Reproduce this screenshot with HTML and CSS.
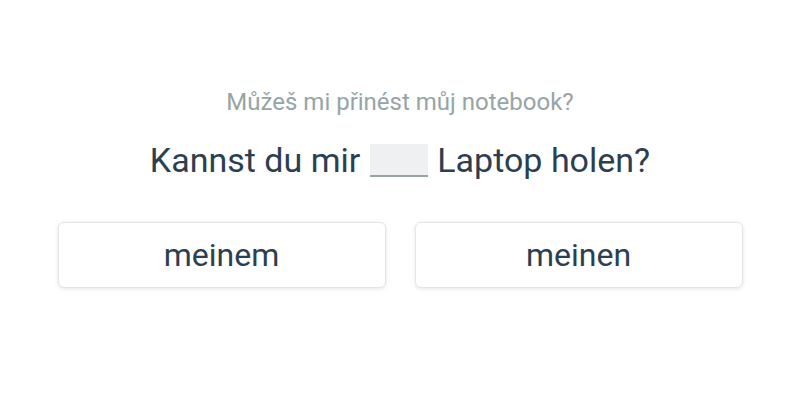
FILE: index.html
```html
<!DOCTYPE html>
<html lang="de">
<head>
<meta charset="utf-8">
<link rel="stylesheet" href="styles.css">
</head>
<body>
<main class="exercise">
  <p class="hint">Můžeš mi přinést můj notebook?</p>
  <p class="sentence">Kannst du mir <span class="blank"></span> Laptop holen?</p>
  <div class="choices">
    <button class="choice">meinem</button>
    <button class="choice">meinen</button>
  </div>
</main>
</body>
</html>
```

FILE: styles.css
```css
html, body {
  margin: 0;
  padding: 0;
  background: #ffffff;
}
body {
  font-family: Roboto, "Noto Sans", sans-serif;
  width: 800px;
  height: 400px;
}
.exercise {
  display: flex;
  flex-direction: column;
  align-items: center;
  padding-top: 86px;
}
.hint {
  margin: 0;
  font-size: 24px;
  line-height: 32px;
  color: #95a5a6;
}
.sentence {
  margin: 22px 0 0;
  font-size: 34px;
  line-height: 40px;
  color: #2c3e50;
  display: flex;
  align-items: center;
}
.blank {
  display: inline-block;
  width: 58px;
  height: 31px;
  background: #eef0f1;
  border-bottom: 2px solid #95a5a6;
  margin: 0 9px 0 10px;
}
.choices {
  display: grid;
  grid-template-columns: 328px 328px;
  gap: 29px;
  margin-top: 42px;
}
.choice {
  height: 66px;
  background: #ffffff;
  border: 1px solid #e3e6e8;
  border-radius: 6px;
  box-shadow: 0 1px 4px rgba(0,0,0,0.10);
  font-family: Roboto, "Noto Sans", sans-serif;
  font-size: 32px;
  color: #2c3e50;
  padding: 0;
}
```
